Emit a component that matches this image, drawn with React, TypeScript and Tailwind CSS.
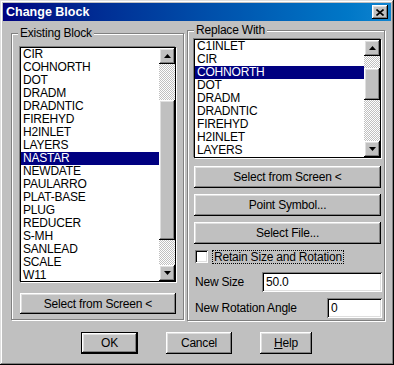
import type { ReactNode } from "react";

const EXISTING = [
  "CIR",
  "COHNORTH",
  "DOT",
  "DRADM",
  "DRADNTIC",
  "FIREHYD",
  "H2INLET",
  "LAYERS",
  "NASTAR",
  "NEWDATE",
  "PAULARRO",
  "PLAT-BASE",
  "PLUG",
  "REDUCER",
  "S-MH",
  "SANLEAD",
  "SCALE",
  "W11",
];

const REPLACE = ["C1INLET", "CIR", "COHNORTH", "DOT", "DRADM", "DRADNTIC", "FIREHYD", "H2INLET", "LAYERS"];

const RAISED =
  "shadow-[inset_-1px_-1px_#000,inset_1px_1px_#fff,inset_-2px_-2px_#808080,inset_2px_2px_#dfdfdf]";
const SUNKEN =
  "shadow-[inset_1px_1px_#808080,inset_-1px_-1px_#fff,inset_2px_2px_#000,inset_-2px_-2px_#dfdfdf]";
const DITHER =
  "bg-[image:repeating-conic-gradient(#c0c0c0_0_25%,#fff_0_50%)] bg-[length:2px_2px]";

function Arrow({ down }: { down?: boolean }) {
  return (
    <svg width="7" height="4" viewBox="0 0 7 4">
      <polygon points={down ? "0,0 7,0 3.5,4" : "3.5,0 7,4 0,4"} fill="#000" />
    </svg>
  );
}

function ScrollBar({ before, thumb }: { before: number; thumb: number }) {
  return (
    <div className="flex w-[16px] flex-col">
      <div className={`flex h-[16px] items-center justify-center bg-[#c0c0c0] ${RAISED}`}>
        <Arrow />
      </div>
      <div className={DITHER} style={{ height: before }} />
      <div className={`bg-[#c0c0c0] ${RAISED}`} style={{ height: thumb }} />
      <div className={`flex-1 ${DITHER}`} />
      <div className={`flex h-[16px] items-center justify-center bg-[#c0c0c0] ${RAISED}`}>
        <Arrow down />
      </div>
    </div>
  );
}

function ListBox({
  items,
  selected,
  className,
  before,
  thumb,
}: {
  items: string[];
  selected: string;
  className: string;
  before: number;
  thumb: number;
}) {
  return (
    <div className={`flex border border-black bg-white shadow-[-1px_-1px_0_#808080,1px_1px_0_#fff] ${className}`}>
      <div className="flex-1 overflow-hidden">
        {items.map((item) => (
          <div
            key={item}
            className={`h-[13px] pl-[2px] leading-[13px] ${item === selected ? "bg-[#000080] text-white" : "text-black"}`}
          >
            {item}
          </div>
        ))}
      </div>
      <ScrollBar before={before} thumb={thumb} />
    </div>
  );
}

function Button({ children, className = "" }: { children: ReactNode; className?: string }) {
  return (
    <div className={`flex items-center justify-center bg-[#c0c0c0] text-black ${RAISED} ${className}`}>
      {children}
    </div>
  );
}

function Group({ label, className, children }: { label: string; className: string; children: ReactNode }) {
  return (
    <div className={`relative border border-[#808080] shadow-[1px_1px_0_#fff,inset_1px_1px_0_#fff] ${className}`}>
      <span className="absolute -top-[8px] left-[6px] bg-[#c0c0c0] px-[2px] leading-[14px]">{label}</span>
      {children}
    </div>
  );
}

export default function App() {
  return (
    <div className="flex h-[365px] w-[394px] flex-col bg-[#c0c0c0] p-[3px] font-['Liberation_Sans',Arial,sans-serif] text-[12px] tracking-[-0.2px] text-black shadow-[inset_-1px_-1px_#000,inset_1px_1px_#dfdfdf,inset_-2px_-2px_#808080,inset_2px_2px_#fff]">
      <div className="flex h-[18px] items-center justify-between bg-linear-to-r from-[#000080] to-[#1084d0] pl-[3px] pr-[3px]">
        <span className="text-[12.5px] font-bold tracking-normal text-white">Change Block</span>
        <div className={`flex h-[14px] w-[16px] items-center justify-center bg-[#c0c0c0] ${RAISED}`}>
          <svg width="8" height="7" viewBox="0 0 8 7">
            <path d="M0.5 0.5 L7.5 6.5 M7.5 0.5 L0.5 6.5" stroke="#000" strokeWidth="1.6" />
          </svg>
        </div>
      </div>

      <div className="flex items-start">
        <Group label="Existing Block" className="ml-[8px] mt-[12px] h-[287px] w-[173px] pl-[8px] pt-[13px]">
          <ListBox items={EXISTING} selected="NASTAR" className="h-[235px] w-[156px]" before={36} thumb={140} />
          <Button className="mt-[11px] h-[21px] w-[156px]">Select from Screen &lt;</Button>
        </Group>

        <Group label="Replace With" className="ml-[3px] mt-[9px] h-[291px] w-[198px] pl-[6px] pt-[8px]">
          <ListBox items={REPLACE} selected="COHNORTH" className="h-[119px] w-[187px]" before={12} thumb={32} />
          <Button className="mt-[8px] h-[22px] w-[187px]">Select from Screen &lt;</Button>
          <Button className="mt-[6px] h-[22px] w-[187px]">Point Symbol...</Button>
          <Button className="mt-[6px] h-[22px] w-[187px]">Select File...</Button>

          <div className="mt-[6px] flex h-[13px] items-center">
            <div className={`ml-[1px] h-[13px] w-[13px] bg-white ${SUNKEN}`} />
            <span className="ml-[4px] border border-dotted border-black px-[1px] leading-[12px]">
              Retain Size and Rotation
            </span>
          </div>

          <div className="mt-[9px] flex w-[188px] items-center justify-between">
            <span className="pl-[1px]">New Size</span>
            <div className={`h-[20px] w-[120px] bg-white pl-[4px] leading-[20px] ${SUNKEN}`}>50.0</div>
          </div>
          <div className="mt-[6px] flex w-[188px] items-center justify-between">
            <span className="pl-[1px]">New Rotation Angle</span>
            <div className={`h-[20px] w-[55px] bg-white pl-[4px] leading-[20px] ${SUNKEN}`}>0</div>
          </div>
        </Group>
      </div>

      <div className="mt-[11px] flex">
        <div className="ml-[78px] h-[22px] w-[57px] border border-black">
          <Button className="h-full w-full">OK</Button>
        </div>
        <Button className="ml-[28px] h-[22px] w-[66px]">Cancel</Button>
        <Button className="ml-[28px] h-[22px] w-[52px]">
          <span className="underline">H</span>elp
        </Button>
      </div>
    </div>
  );
}
